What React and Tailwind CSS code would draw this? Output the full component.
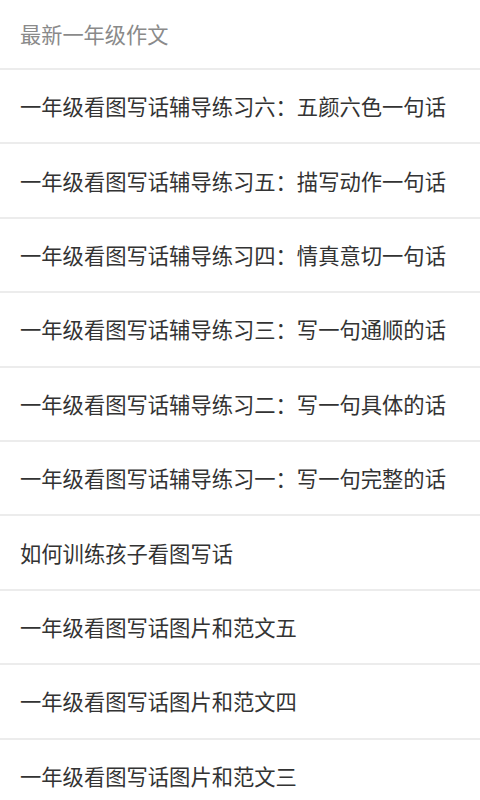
const items = [
  '一年级看图写话辅导练习六：五颜六色一句话',
  '一年级看图写话辅导练习五：描写动作一句话',
  '一年级看图写话辅导练习四：情真意切一句话',
  '一年级看图写话辅导练习三：写一句通顺的话',
  '一年级看图写话辅导练习二：写一句具体的话',
  '一年级看图写话辅导练习一：写一句完整的话',
  '如何训练孩子看图写话',
  '一年级看图写话图片和范文五',
  '一年级看图写话图片和范文四',
  '一年级看图写话图片和范文三',
];

export default function App() {
  return (
    <div
      className="w-[480px] h-[800px] overflow-hidden bg-white"
      style={{ fontFamily: '"Noto Sans CJK SC", "Noto Sans", sans-serif' }}
    >
      {/* Section title */}
      <div className="h-[70px] flex items-center px-5 border-b-2 border-[#ececec]">
        <span className="text-[21.2px] text-[#8a8a8a]">最新一年级作文</span>
      </div>

      {/* Article list */}
      <ul>
        {items.map((title, i) => (
          <li
            key={i}
            className="h-[74.4px] flex items-center px-5 border-b-2 border-[#ececec]"
          >
            <span className="text-[21.3px] text-[#333333] whitespace-nowrap">{title}</span>
          </li>
        ))}
      </ul>
    </div>
  );
}
